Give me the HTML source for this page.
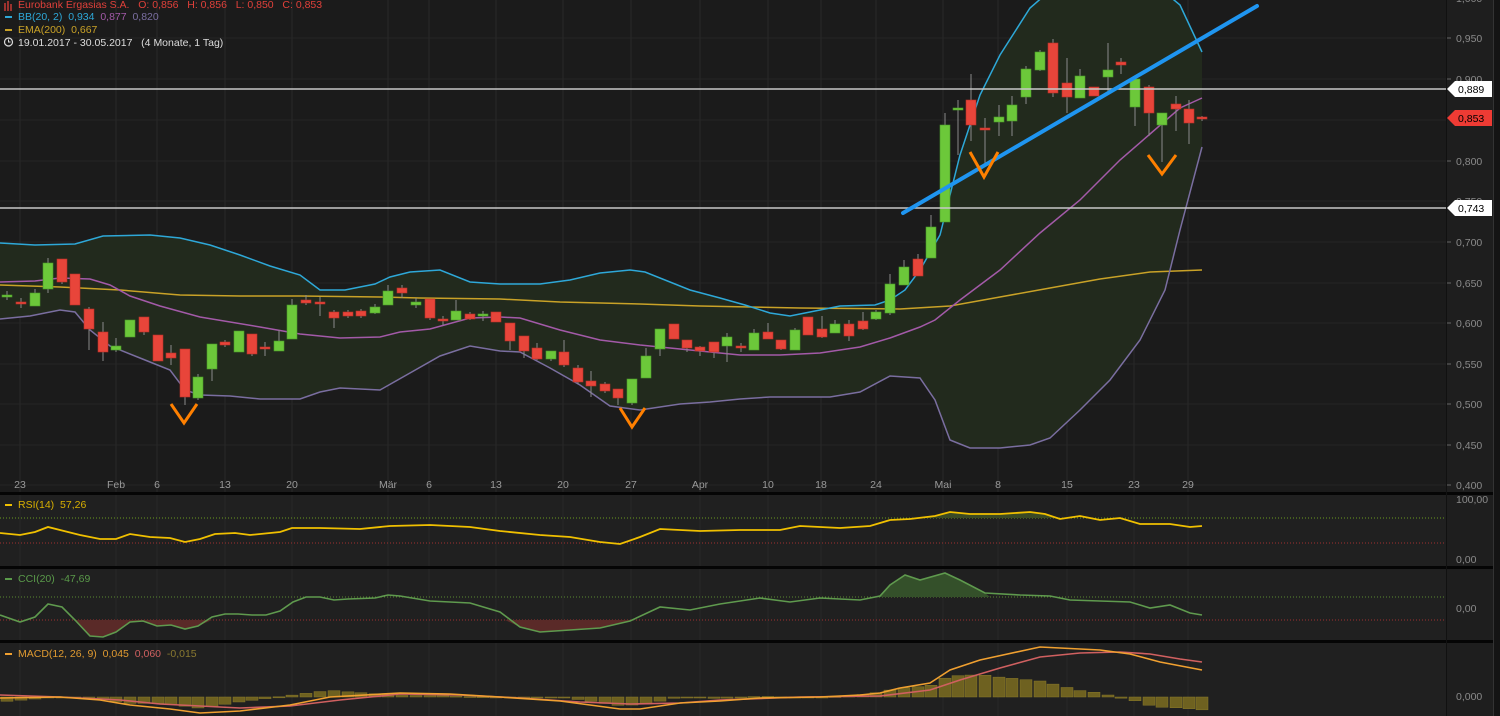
<!DOCTYPE html>
<html><head><meta charset="utf-8"><style>
html,body{margin:0;padding:0;background:#1b1b1b;width:1500px;height:716px;overflow:hidden}
svg{display:block}
text{font-family:"Liberation Sans",sans-serif;font-size:10.5px;white-space:pre}
</style></head><body>
<svg id="s" width="1500" height="716" xmlns="http://www.w3.org/2000/svg" xml:space="preserve">
<rect width="1500" height="716" fill="#1b1b1b"/>
<rect x="0" y="495" width="1446" height="72" fill="#202020"/>
<rect x="0" y="569" width="1446" height="72" fill="#202020"/>
<rect x="0" y="643" width="1446" height="73" fill="#202020"/>
<rect x="1447" y="0" width="46" height="716" fill="#1e1e1e"/>
<rect x="1493" y="0" width="7" height="716" fill="#141414"/>
<g id="grid"></g>
<g id="fills"></g>
<g id="lines"></g>
<g id="candles"></g>
<line x1="0" y1="89" x2="1447" y2="89" stroke="#c8c8c8" stroke-width="1.5"/>
<line x1="0" y1="208" x2="1447" y2="208" stroke="#c8c8c8" stroke-width="1.5"/>
<line x1="903" y1="213" x2="1257" y2="6" stroke="#1f95f0" stroke-width="4" stroke-linecap="round"/>
<g fill="none" stroke="#ff8000" stroke-width="3">
<polyline points="171,404 184,423 197,404"/>
<polyline points="620,408 632,427 645,408"/>
<polyline points="970,152 984,177 998,152"/>
<polyline points="1148,155 1162,174 1176,155"/>
</g>
<rect x="0" y="492" width="1493" height="3" fill="#050505"/>
<rect x="0" y="566" width="1493" height="3" fill="#050505"/>
<rect x="0" y="640" width="1493" height="3" fill="#050505"/>
<line x1="1446.5" y1="0" x2="1446.5" y2="716" stroke="#111" stroke-width="1"/>
<line x1="1493.5" y1="0" x2="1493.5" y2="716" stroke="#333" stroke-width="1"/>
<g fill="#8a8a8a">
<text x="1456" y="2">1,000</text>
<text x="1456" y="42">0,950</text>
<text x="1456" y="83">0,900</text>
<text x="1456" y="165">0,800</text>
<text x="1456" y="205">0,750</text>
<text x="1456" y="246">0,700</text>
<text x="1456" y="287">0,650</text>
<text x="1456" y="327">0,600</text>
<text x="1456" y="368">0,550</text>
<text x="1456" y="408">0,500</text>
<text x="1456" y="449">0,450</text>
<text x="1456" y="489">0,400</text>
<text x="1456" y="503">100,00</text>
<text x="1456" y="563">0,00</text>
<text x="1456" y="612">0,00</text>
<text x="1456" y="700">0,000</text>
</g>
<g stroke="#666"><line x1="1447" y1="38" x2="1451" y2="38"/><line x1="1447" y1="79" x2="1451" y2="79"/><line x1="1447" y1="161" x2="1451" y2="161"/><line x1="1447" y1="242" x2="1451" y2="242"/><line x1="1447" y1="283" x2="1451" y2="283"/><line x1="1447" y1="323" x2="1451" y2="323"/><line x1="1447" y1="364" x2="1451" y2="364"/><line x1="1447" y1="404" x2="1451" y2="404"/><line x1="1447" y1="445" x2="1451" y2="445"/><line x1="1447" y1="485" x2="1451" y2="485"/></g>
<path d="M1447,89 L1455,81 L1492,81 L1492,97 L1455,97 Z" fill="#fff"/>
<text x="1458" y="93" fill="#000">0,889</text>
<path d="M1447,118 L1455,110 L1492,110 L1492,126 L1455,126 Z" fill="#ee3b34"/>
<text x="1458" y="122" fill="#000">0,853</text>
<path d="M1447,208 L1455,200 L1492,200 L1492,216 L1455,216 Z" fill="#fff"/>
<text x="1458" y="212" fill="#000">0,743</text>
<g fill="#9a9a9a" text-anchor="middle">
<text x="20" y="488">23</text><text x="116" y="488">Feb</text><text x="157" y="488">6</text><text x="225" y="488">13</text><text x="292" y="488">20</text><text x="388" y="488">Mär</text><text x="429" y="488">6</text><text x="496" y="488">13</text><text x="563" y="488">20</text><text x="631" y="488">27</text><text x="700" y="488">Apr</text><text x="768" y="488">10</text><text x="821" y="488">18</text><text x="876" y="488">24</text><text x="943" y="488">Mai</text><text x="998" y="488">8</text><text x="1067" y="488">15</text><text x="1134" y="488">23</text><text x="1188" y="488">29</text>
</g>
<g>
<path d="M5,3 v8 M8,1 v10 M11,4 v7" stroke="#e0403a" stroke-width="1.3"/>
<text x="18" y="8" fill="#e0403a">Eurobank Ergasias S.A.   O: 0,856   H: 0,856   L: 0,850   C: 0,853</text>
<rect x="5" y="16" width="7" height="2" fill="#2ea8d8"/>
<text x="18" y="20" fill="#2ea8d8">BB(20, 2)  0,934  <tspan fill="#a35aa8">0,877</tspan>  <tspan fill="#7a6ea0">0,820</tspan></text>
<rect x="5" y="29" width="7" height="2" fill="#c9a227"/>
<text x="18" y="33" fill="#c9a227">EMA(200)  0,667</text>
<circle cx="8.5" cy="42" r="4" fill="none" stroke="#ddd" stroke-width="1.2"/><path d="M8.5,39.5 V42 H10.5" stroke="#ddd" fill="none"/>
<text x="18" y="46" fill="#ddd">19.01.2017 - 30.05.2017   (4 Monate, 1 Tag)</text>
<rect x="5" y="504" width="7" height="2" fill="#f0c000"/>
<text x="18" y="508" fill="#d9b000">RSI(14)  57,26</text>
<rect x="5" y="578" width="7" height="2" fill="#5a9a4a"/>
<text x="18" y="582" fill="#5a9a4a">CCI(20)  -47,69</text>
<rect x="5" y="653" width="7" height="2" fill="#f0a030"/>
<text x="18" y="657" fill="#e09a30">MACD(12, 26, 9)  0,045  <tspan fill="#d06060">0,060</tspan>  <tspan fill="#8a7a30">-0,015</tspan></text>
</g>
</svg>
<script>
var NS="http://www.w3.org/2000/svg";
function el(p,t,a){var e=document.createElementNS(NS,t);for(var k in a)e.setAttribute(k,a[k]);document.getElementById(p).appendChild(e);return e;}
function pts(a){return a.map(function(p){return p[0]+","+p[1]}).join(" ");}
[38,79,120,161,201,242,283,323,364,404,445,485].forEach(function(y){el("grid","line",{x1:0,y1:y,x2:1446,y2:y,stroke:"#262626"});});
[20,116,157,225,292,388,429,496,563,631,700,768,821,876,943,998,1067,1134,1188].forEach(function(x){el("grid","line",{x1:x,y1:0,x2:x,y2:716,stroke:"#282828"});});
[[518,"#6a9a20"],[543,"#a03030"],[597,"#5a8a30"],[620,"#a03030"]].forEach(function(a){el("grid","line",{x1:0,y1:a[0],x2:1446,y2:a[0],stroke:a[1],"stroke-dasharray":"1,2"});});
var up=[[0,243],[35,245],[75,244],[103,236],[150,235],[180,238],[210,245],[240,255],[270,266],[300,275],[320,290],[345,290],[375,284],[390,277],[410,272],[440,270],[470,282],[500,284],[540,284],[570,280],[600,273],[630,270],[645,272],[690,290],[720,298],[745,305],[770,313],[790,316],[820,310],[840,306],[875,305],[890,300],[905,290],[920,270],[940,235],[960,155],[980,95],[1000,55],[1030,8],[1045,-5],[1150,-20],[1180,5],[1202,52]];
var mid=[[0,282],[35,281],[60,278],[90,279],[110,285],[130,296],[160,306],[200,317],[260,327],[300,334],[340,338],[380,337],[400,332],[430,329],[470,318],[500,317],[520,318],[560,330],[600,340],[640,345],[700,351],[740,355],[780,355],[820,353],[860,347],[890,338],[920,327],[935,320],[960,300],[1000,270],[1040,233],[1080,200],[1120,160],[1150,134],[1180,108],[1202,98]];
var lo=[[0,319],[30,316],[60,310],[75,312],[90,330],[110,346],[140,358],[170,370],[185,390],[200,395],[230,396],[260,399],[300,399],[320,392],[340,388],[380,390],[410,373],[440,356],[470,346],[500,351],[520,352],[550,368],[580,385],[610,406],[640,410],[680,404],[710,402],[740,399],[770,397],[830,397],[860,392],[890,376],[920,378],[935,400],[950,440],[970,448],[1000,448],[1030,445],[1050,438],[1080,410],[1110,380],[1140,340],[1165,290],[1180,230],[1202,147]];
var ema=[[0,285],[60,287],[120,290],[180,295],[240,296],[300,296],[380,297],[420,298],[500,299],[560,302],[640,304],[700,306],[800,308],[900,309],[950,306],[1000,297],[1050,288],[1100,279],[1150,272],[1202,270]];
el("fills","polygon",{points:pts(up.concat(lo.slice().reverse())),fill:"#222a1d"});
el("lines","polyline",{points:pts(ema),fill:"none",stroke:"#c9a227","stroke-width":1.5});
el("lines","polyline",{points:pts(lo),fill:"none",stroke:"#7a6ea0","stroke-width":1.5});
el("lines","polyline",{points:pts(mid),fill:"none",stroke:"#a35aa8","stroke-width":1.5});
el("lines","polyline",{points:pts(up),fill:"none",stroke:"#2ea8d8","stroke-width":1.5});
var C=[[7,295,297,291,300,1],[21,302,304,298,308,0],[35,293,306,289,306,1],[48,263,289,258,293,1],[62,259,282,259,284,0],[75,274,305,274,305,0],[89,309,329,307,350,0],[103,332,352,322,361,0],[116,346,350,338,352,1],[130,320,337,320,337,1],[144,317,332,317,335,0],[158,335,361,335,361,0],[171,353,358,345,365,0],[185,349,397,349,405,0],[198,377,398,374,400,1],[212,344,369,344,381,1],[225,342,345,340,347,0],[239,331,352,331,352,1],[252,334,354,334,356,0],[265,347,349,342,356,0],[279,341,351,330,351,1],[292,305,339,299,339,1],[306,300,303,295,305,0],[320,302,304,297,316,0],[334,312,318,310,328,0],[348,312,316,310,318,0],[361,311,316,309,318,0],[375,307,313,304,314,1],[388,291,305,285,305,1],[402,288,293,285,298,0],[416,302,305,298,308,1],[430,299,318,299,320,0],[443,319,321,316,325,0],[456,311,320,300,320,1],[470,314,319,312,320,0],[483,314,316,311,321,1],[496,312,322,312,322,0],[510,323,341,323,350,0],[524,336,351,336,358,0],[537,348,359,343,360,0],[551,351,359,351,361,1],[564,352,365,340,367,0],[578,368,382,365,384,0],[591,381,386,371,397,0],[605,384,391,382,393,0],[618,389,398,389,405,0],[632,379,403,379,405,1],[646,356,378,348,378,1],[660,329,349,329,356,1],[674,324,339,324,339,0],[687,340,348,340,352,0],[700,347,351,346,356,0],[714,342,352,342,358,0],[727,337,346,333,362,1],[741,346,348,343,352,0],[754,333,350,329,350,1],[768,332,339,323,339,0],[781,340,349,340,350,0],[795,330,350,328,350,1],[808,317,335,317,335,0],[822,329,337,316,338,0],[835,324,333,320,333,1],[849,324,336,320,341,0],[863,321,329,312,330,0],[876,312,319,310,320,1],[890,284,313,274,315,1],[904,267,285,260,285,1],[918,259,276,254,276,0],[931,227,258,215,258,1],[945,125,222,113,222,1],[958,108,110,100,155,1],[971,100,125,74,141,0],[985,128,130,118,165,0],[999,117,122,105,136,1],[1012,105,121,96,136,1],[1026,69,97,66,104,1],[1040,52,70,50,71,1],[1053,43,93,39,97,0],[1067,83,97,58,113,0],[1080,76,98,69,98,1],[1094,87,96,87,96,0],[1108,70,77,43,91,1],[1121,62,65,58,74,0],[1135,79,107,79,126,1],[1149,87,113,85,136,0],[1162,113,125,113,162,1],[1176,104,109,96,131,0],[1189,109,123,100,144,0],[1202,117,119,116,121,0]];
C.forEach(function(c){
 var col=c[5]?"#6cc83a":"#e8453a";
 el("candles","line",{x1:c[0],y1:c[3],x2:c[0],y2:c[4],stroke:"#8a8a8a","stroke-width":1});
 var h=Math.max(c[2]-c[1],2);
 el("candles","rect",{x:c[0]-5,y:c[1],width:10,height:h,fill:col,stroke:c[5]?"#4a9a2a":"#b83028","stroke-width":0.6});
});
var rsi=[[0,533],[20,535],[35,532],[48,527],[60,530],[80,535],[100,539],[116,539],[130,534],[150,537],[170,538],[185,542],[200,539],[215,534],[235,533],[250,535],[280,532],[292,528],[320,528],[360,529],[390,526],[430,525],[470,527],[500,531],[540,535],[570,537],[600,542],[620,544],[640,537],[660,529],[700,531],[740,530],[780,530],[800,526],[840,528],[870,526],[890,520],[910,519],[935,516],[950,512],[970,514],[1000,514],[1030,512],[1045,514],[1060,519],[1080,516],[1100,520],[1120,518],[1140,524],[1170,524],[1190,527],[1202,526]];
var rf=rsi.filter(function(p){return p[0]>=890&&p[0]<=1060});
el("fills","polygon",{points:pts([[890,518]].concat(rf.map(function(p){return [p[0],Math.min(p[1],518)]})).concat([[1060,518]])),fill:"#3a4a25"});
el("lines","polyline",{points:pts(rsi),fill:"none",stroke:"#f0c000","stroke-width":1.8});
var cci=[[0,615],[20,622],[35,617],[48,604],[62,607],[75,620],[90,636],[103,637],[116,632],[130,622],[143,621],[157,626],[171,625],[185,629],[198,626],[212,617],[225,614],[238,614],[252,615],[266,615],[280,611],[293,602],[306,597],[320,597],[334,600],[348,599],[375,598],[388,595],[400,596],[430,601],[470,603],[500,612],[520,627],[540,632],[570,630],[600,628],[630,621],[660,607],[690,610],[720,604],[760,598],[790,602],[820,598],[860,600],[880,596],[890,585],[905,575],[920,580],[945,573],[960,580],[985,593],[1020,595],[1050,596],[1070,600],[1100,601],[1130,602],[1150,608],[1170,605],[1190,613],[1202,615]];
function clipFill(a,b,base,below,col){var f=cci.filter(function(p){return p[0]>=a&&p[0]<=b});el("fills","polygon",{points:pts([[a,base]].concat(f.map(function(p){return [p[0],below?Math.max(p[1],base):Math.min(p[1],base)]})).concat([[b,base]])),fill:col});}
clipFill(70,212,620,1,"#5a2a28");clipFill(505,635,620,1,"#5a2a28");clipFill(875,990,597,0,"#34502a");
el("lines","polyline",{points:pts(cci),fill:"none",stroke:"#5f9a4e","stroke-width":1.6});
var mac=[[0,698],[60,697],[100,700],[130,705],[170,709],[200,713],[240,711],[290,705],[330,697],[400,693],[450,694],[500,697],[560,701],[620,709],[640,709],[680,703],[720,701],[760,698],[820,697],[860,695],[880,693],[900,688],[930,683],[950,670],[980,660],[1040,647],[1100,650],[1130,654],[1160,662],[1202,670]];
var sig=[[0,695],[60,697],[120,700],[160,704],[200,706],[240,708],[290,706],[340,700],[400,694],[460,695],[520,698],[580,702],[630,704],[680,703],[720,700],[800,697],[880,696],[930,690],[960,680],[1000,668],[1040,657],[1080,653],[1120,652],[1150,654],[1180,659],[1202,662]];
function interp(a,x){for(var i=1;i<a.length;i++){if(x<=a[i][0]){var t=(x-a[i-1][0])/(a[i][0]-a[i-1][0]);return a[i-1][1]+t*(a[i][1]-a[i-1][1]);}}return a[a.length-1][1];}
C.forEach(function(c){var d=(interp(sig,c[0])-interp(mac,c[0]))*1.6;var y=d>0?697-d:697;el("fills","rect",{x:c[0]-6,y:y,width:12,height:Math.max(Math.abs(d),1),fill:"#6e6120",stroke:"#8a7a2a","stroke-width":0.5});});
el("lines","polyline",{points:pts(sig),fill:"none",stroke:"#d06060","stroke-width":1.6});
el("lines","polyline",{points:pts(mac),fill:"none",stroke:"#f0a030","stroke-width":1.6});
</script>
</body></html>
